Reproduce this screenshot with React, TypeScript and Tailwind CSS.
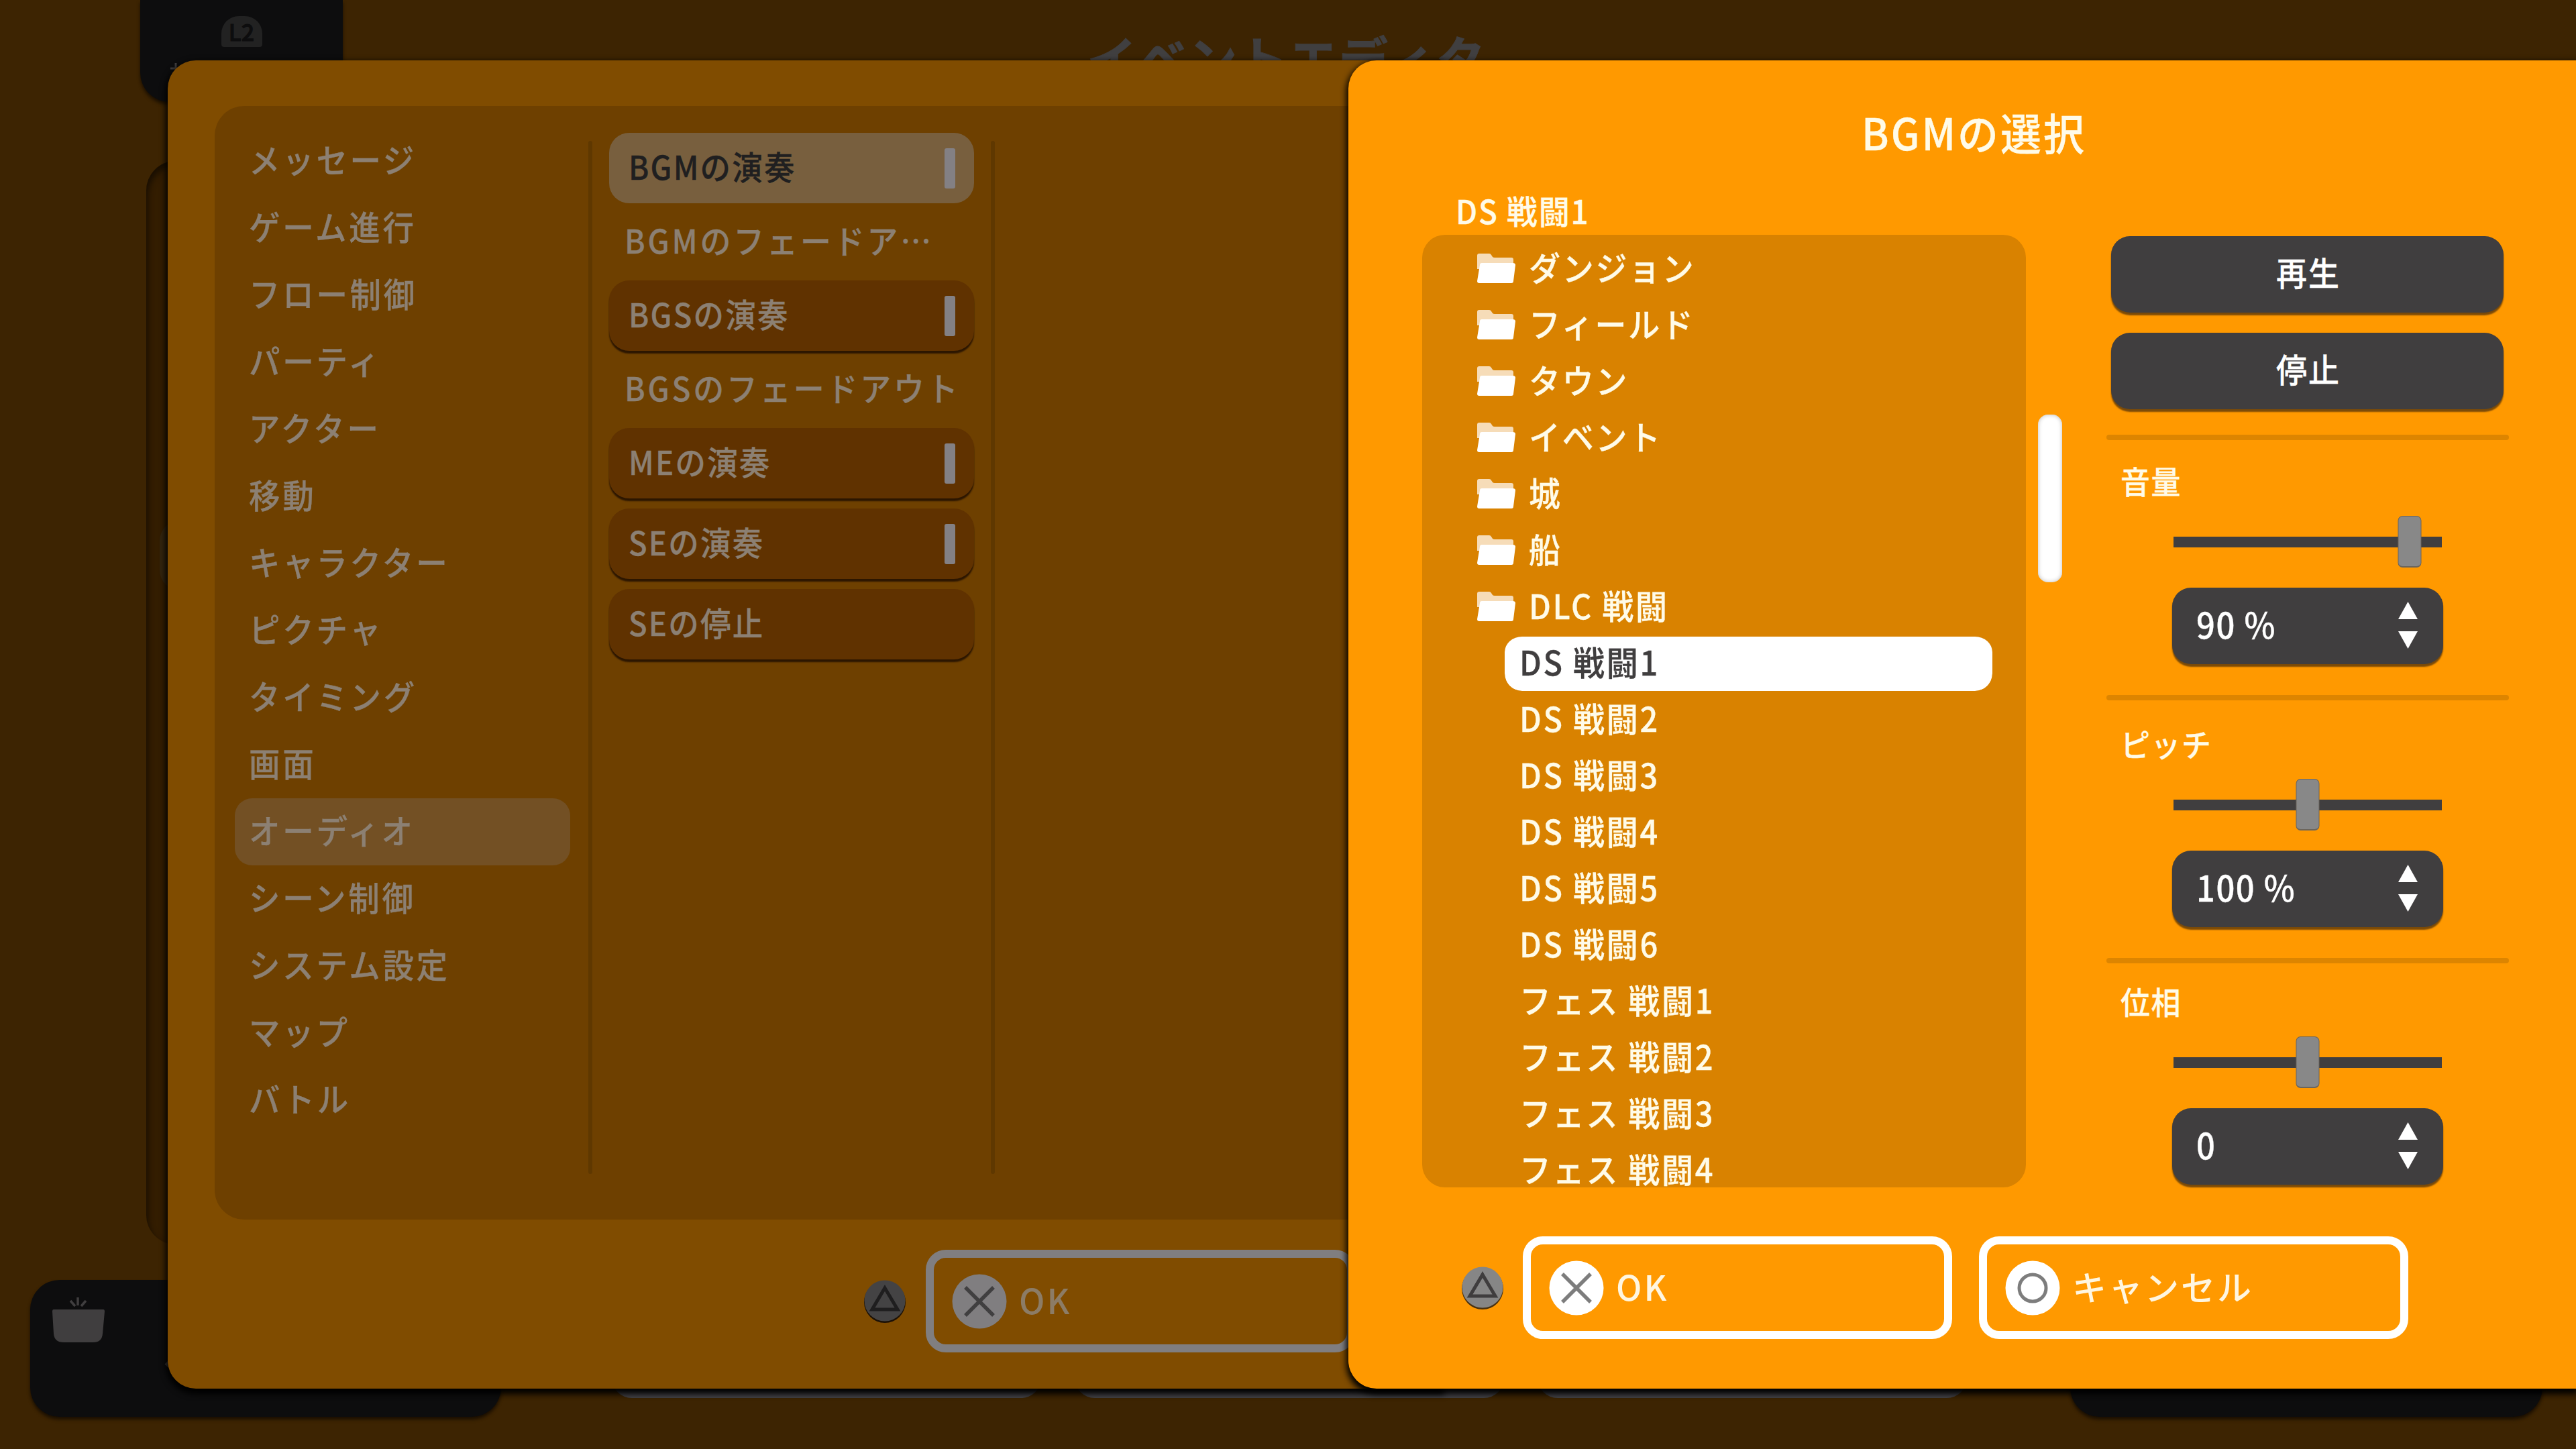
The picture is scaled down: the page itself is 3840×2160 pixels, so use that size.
import clsx from 'clsx';
import type { ReactNode } from 'react';

const categories = [
  'メッセージ',
  'ゲーム進行',
  'フロー制御',
  'パーティ',
  'アクター',
  '移動',
  'キャラクター',
  'ピクチャ',
  'タイミング',
  '画面',
  'オーディオ',
  'シーン制御',
  'システム設定',
  'マップ',
  'バトル',
];

const commands = [
  { label: 'BGMの演奏', kind: 'selected', bar: true },
  { label: 'BGMのフェードア…', kind: 'plain', bar: false },
  { label: 'BGSの演奏', kind: 'button', bar: true },
  { label: 'BGSのフェードアウト', kind: 'plain', bar: false },
  { label: 'MEの演奏', kind: 'button', bar: true },
  { label: 'SEの演奏', kind: 'button', bar: true },
  { label: 'SEの停止', kind: 'button', bar: false },
];

const folders = ['ダンジョン', 'フィールド', 'タウン', 'イベント', '城', '船', 'DLC 戦闘'];

const tracks = [
  'DS 戦闘1',
  'DS 戦闘2',
  'DS 戦闘3',
  'DS 戦闘4',
  'DS 戦闘5',
  'DS 戦闘6',
  'フェス 戦闘1',
  'フェス 戦闘2',
  'フェス 戦闘3',
  'フェス 戦闘4',
];

const sliders = [
  { label: '音量', value: '90 %', position: 88, pad: 'pt-[4px]', height: 'h-[388px]' },
  { label: 'ピッチ', value: '100 %', position: 50, pad: 'pt-[8px]', height: 'h-[392px]' },
  { label: '位相', value: '0', position: 50, pad: 'pt-0', height: 'h-[384px]' },
];

// The UI font is a little taller and heavier than the regular cut
function Label({ className, children }: { className?: string; children: ReactNode }) {
  return (
    <span className={clsx('inline-block scale-y-[1.07] [-webkit-text-stroke:0.3px_currentColor]', className)}>
      {children}
    </span>
  );
}

function TriangleHint({ dim = false }: { dim?: boolean }) {
  return (
    <svg width="64" height="64" viewBox="0 0 64 64">
      <circle cx="32" cy="33" r="31" fill={dim ? '#1c1106' : '#4a3210'} />
      <circle cx="32" cy="31" r="30.5" fill={dim ? '#444344' : '#868686'} />
      <path
        d="M32 12 L51 44 H13 Z"
        fill="none"
        stroke={dim ? '#1f1e1f' : '#3f3d3e'}
        strokeWidth="5"
      />
    </svg>
  );
}

function PadIcon({ shape, dim = false }: { shape: 'cross' | 'circle'; dim?: boolean }) {
  const stroke = dim ? '#403f40' : '#7d7d7d';
  return (
    <svg width="82" height="82" viewBox="0 0 82 82" className="shrink-0">
      <circle cx="41" cy="41" r="40.5" fill={dim ? '#807e80' : '#ffffff'} />
      {shape === 'cross' ? (
        <path d="M20 20 L62 62 M62 20 L20 62" stroke={stroke} strokeWidth="5.5" />
      ) : (
        <circle cx="41" cy="41" r="20" fill="none" stroke={stroke} strokeWidth="5" />
      )}
    </svg>
  );
}

function FolderIcon() {
  return (
    <svg width="58" height="46" viewBox="0 0 58 46" className="shrink-0">
      <path d="M1 4 Q1 1 4 1 H19 Q21 1 22 3 L24 6 Q25 7 27 7 H52 Q55 7 55 10 V24 H1 Z" fill="#f6dcb8" />
      <path d="M8 15 H54 Q58 15 58 18 L55 42 Q55 45 52 45 H4 Q1 45 1 42 L5 18 Q5 15 8 15 Z" fill="#ffffff" />
    </svg>
  );
}

function FooterButton({
  shape,
  dim = false,
  children,
}: {
  shape: 'cross' | 'circle';
  dim?: boolean;
  children: ReactNode;
}) {
  return (
    <div
      className={clsx(
        'flex h-[153px] w-[640px] shrink-0 items-center gap-[18px] rounded-[30px] border-[12px] pl-[27px]',
        dim ? 'border-[#807e80] text-[#8c7c66]' : 'border-white text-[#fff6e0]',
      )}
    >
      <PadIcon shape={shape} dim={dim} />
      <span className="-mt-[5px] text-[51px] tracking-[3px]">{children}</span>
    </div>
  );
}

function ValueSlider({ label, value, position, pad, height }: (typeof sliders)[number]) {
  return (
    <div className={clsx('flex flex-col', height)}>
      <div className="h-[8px] w-[600px] shrink-0 rounded-full bg-[#dd8500]" />
      <div className={clsx('flex flex-col', pad)}>
        <div className="flex h-[109px] items-center pt-[3px] pl-[21px] text-[44px] tracking-[1.5px] text-[#fffbe8]">
          <Label>{label}</Label>
        </div>
        <div className="relative ml-[100px] flex h-[78px] w-[400px] items-center">
          <div className="h-[16px] w-full bg-[#403e3f]" />
          <div
            className="absolute top-0 h-[77px] w-[35px] -translate-x-1/2 rounded-[7px] border border-b-2 border-[#6b655c] bg-[#888888]"
            style={{ left: `${position}%` }}
          />
        </div>
        <div className="mt-[29px] ml-[98px] flex h-[114px] w-[404px] items-center justify-between rounded-[28px] bg-[#403e3f] pr-[38px] pb-[3px] pl-[36px] text-[49px] tracking-[1.5px] text-white shadow-[0_4px_2px_#7a4a08]">
          <Label className="-mt-[4px]">{value}</Label>
          <svg width="29" height="70" viewBox="0 0 29 70" fill="#ffffff">
            <path d="M14.5 0 L29 26 H0 Z" />
            <path d="M14.5 70 L29 44 H0 Z" />
          </svg>
        </div>
      </div>
    </div>
  );
}

// The editor screen that lies dimmed under both dialogs
function EditorBackdrop() {
  return (
    <div className="absolute inset-0">
      <div className="absolute top-0 left-[209px] flex h-[152px] w-[302px] justify-center rounded-b-[44px] bg-[#0d0d0e] shadow-[0_4px_5px_#1a0f02]">
        <div className="mt-[24px] flex h-[46px] w-[61px] items-center justify-center rounded-t-[26px] rounded-b-[4px] bg-[#222222] text-[34px] leading-none text-[#0d0d0e] [-webkit-text-stroke:1px_currentColor]">
          L2
        </div>
        <svg width="20" height="20" viewBox="0 0 20 20" className="absolute top-[94px] left-[45px]">
          <path d="M8 0 V20 M0 8 H20" stroke="#403e3f" strokeWidth="3" />
        </svg>
      </div>
      <div className="absolute top-[36px] left-[1621px] text-[73px] leading-[96px] font-bold tracking-[2px] whitespace-nowrap text-[#403f40] [-webkit-text-stroke:1px_currentColor]">
        イベントエディタ
      </div>
      <div className="absolute top-[240px] left-[218px] h-[1615px] w-[400px] rounded-[44px] bg-[#331d00] shadow-[inset_3px_7px_8px_#1a0f02]">
        <div className="absolute top-[536px] left-[20px] h-[104px] w-[300px] rounded-[30px] bg-[#33240e]" />
      </div>
      <div className="absolute top-[1908px] left-[45px] h-[204px] w-[702px] rounded-[44px] bg-[#0d0d0e] shadow-[0_4px_5px_#1a0f02]">
        <svg width="80" height="70" viewBox="0 0 80 70" className="absolute top-[26px] left-[32px]" fill="#403e3f">
          <path d="M3 18 H77 Q79 18 79 21 L76 54 Q75 67 62 67 H18 Q4 67 3 54 L1 21 Q1 18 3 18 Z" />
          <path d="M28 5 L35 13 M39 0 V12 M51 5 L44 13" stroke="#403e3f" strokeWidth="3.5" />
        </svg>
        <div className="absolute top-[122px] left-[202px] size-[7px] rotate-45 bg-[#403e3f]" />
      </div>
      <div className="absolute top-[1960px] left-[912px] flex gap-[50px]">
        <div className="h-[124px] w-[640px] rounded-[30px] bg-[#444347]" />
        <div className="h-[124px] w-[640px] rounded-[30px] bg-[#444347]" />
        <div className="h-[124px] w-[640px] rounded-[30px] bg-[#444347]" />
      </div>
      <div className="absolute top-[1908px] left-[3086px] h-[204px] w-[704px] rounded-[44px] bg-[#0d0d0e] shadow-[0_4px_5px_#1a0f02]" />
    </div>
  );
}

function CommandDialog() {
  return (
    <div className="absolute top-[90px] left-[250px] flex h-[1980px] w-[1900px] flex-col rounded-l-[42px] bg-[#804c00] pt-[68px] pl-[70px] text-[#8c8073] shadow-[0_5px_10px_3px_#000000]">
      <div className="flex h-[1660px] rounded-l-[44px] bg-[#6e4000] pt-[32px] pl-[30px]">
        <div className="flex w-[500px] flex-col">
          {categories.map((name) => (
            <div
              key={name}
              className={clsx(
                'flex h-[100px] shrink-0 items-center rounded-[26px] pb-[7px] pl-[21px] text-[46.5px] tracking-[3.7px]',
                name === 'オーディオ' && 'bg-[#735024]',
              )}
            >
              <Label>{name}</Label>
            </div>
          ))}
        </div>
        <div className="mt-[20px] ml-[27px] h-[1540px] w-[6px] rounded-full bg-[#5f3800]" />
        <div className="mt-[8px] ml-[25px] flex w-[544px] flex-col gap-[15px]">
          {commands.map(({ label, kind, bar }) => (
            <div
              key={label}
              className={clsx(
                'flex shrink-0 items-center justify-between whitespace-nowrap',
                kind === 'plain' && 'h-[85px] pb-[6px] pl-[23px] text-[46px] tracking-[3.8px]',
                kind !== 'plain' && 'h-[105px] rounded-[30px] pr-[28px] pl-[29px] text-[45.5px] tracking-[2.2px]',
                kind === 'selected' && 'bg-[#785f3e] text-[#201f20]',
                kind === 'button' && 'bg-[#603200] shadow-[0_4px_2px_#2c1600]',
              )}
            >
              <Label className={clsx(kind !== 'plain' && '-mt-[6px]')}>{label}</Label>
              {bar && <div className="h-[60px] w-[16px] rounded-[3px] bg-[#838084]" />}
            </div>
          ))}
        </div>
        <div className="mt-[20px] ml-[25px] h-[1540px] w-[6px] rounded-full bg-[#5f3800]" />
      </div>
      <div className="mt-[45px] ml-[967px] flex items-center gap-[29px]">
        <TriangleHint dim />
        <FooterButton shape="cross" dim>
          OK
        </FooterButton>
      </div>
    </div>
  );
}

function BgmDialog() {
  return (
    <div className="absolute top-[90px] right-0 flex h-[1980px] w-[1830px] flex-col rounded-l-[42px] bg-[#ff9900] text-[#fffbe8] shadow-[0_5px_10px_3px_#000000]">
      <div className="flex h-[192px] items-center justify-center pt-[19px] pl-[35px] text-[61px] tracking-[3px]">
        <Label>BGMの選択</Label>
      </div>
      <div className="flex pl-[110px]">
        <div className="flex w-[900px] flex-col">
          <div className="flex h-[68px] items-center pb-[6px] pl-[50px] text-[46px] tracking-[1.8px]">
            <Label>DS 戦闘1</Label>
          </div>
          <div className="h-[1420px] rounded-[34px] bg-[#d98200] pt-[8px] text-[47px] leading-none tracking-[2.7px]">
            {folders.map((name) => (
              <div key={name} className="flex h-[84px] items-center gap-[20px] pl-[81px]">
                <FolderIcon />
                <Label className="-mt-[5px]">{name}</Label>
              </div>
            ))}
            {tracks.map((name, i) => (
              <div
                key={name}
                className={clsx(
                  'ml-[123px] flex h-[84px] w-[727px] items-center rounded-[26px] border-t-3 border-transparent bg-clip-padding pb-[9px] pl-[22px]',
                  i === 0 && 'bg-white text-[#403e3f]',
                )}
              >
                <Label>{name}</Label>
              </div>
            ))}
          </div>
        </div>
        <div className="mt-[336px] ml-[18px] h-[250px] w-[36px] rounded-[15px] bg-white shadow-[inset_0_0_6px_#bbbbbb]" />
        <div className="mt-[70px] ml-[66px] flex flex-col">
          <div className="ml-[7px] flex w-[585px] flex-col gap-[30px]">
            {['再生', '停止'].map((name) => (
              <div
                key={name}
                className="flex h-[114px] items-center justify-center rounded-[28px] bg-[#403e3f] pb-[8px] pl-[3px] text-[46px] tracking-[2px] text-white shadow-[0_4px_2px_#7a4a08]"
              >
                <Label>{name}</Label>
              </div>
            ))}
          </div>
          <div className="mt-[38px] flex flex-col">
            {sliders.map((slider) => (
              <ValueSlider key={slider.label} {...slider} />
            ))}
          </div>
        </div>
      </div>
      <div className="absolute top-[1753px] left-[168px] flex items-center gap-[28px]">
        <TriangleHint />
        <FooterButton shape="cross">OK</FooterButton>
        <div className="ml-[12px]">
          <FooterButton shape="circle">キャンセル</FooterButton>
        </div>
      </div>
    </div>
  );
}

export default function App() {
  return (
    <div
      lang="ja"
      className="relative h-[2160px] w-[3840px] overflow-hidden bg-[#3d2402] font-['Noto_Sans_CJK_JP',sans-serif] font-medium"
    >
      <EditorBackdrop />
      <CommandDialog />
      <BgmDialog />
    </div>
  );
}
